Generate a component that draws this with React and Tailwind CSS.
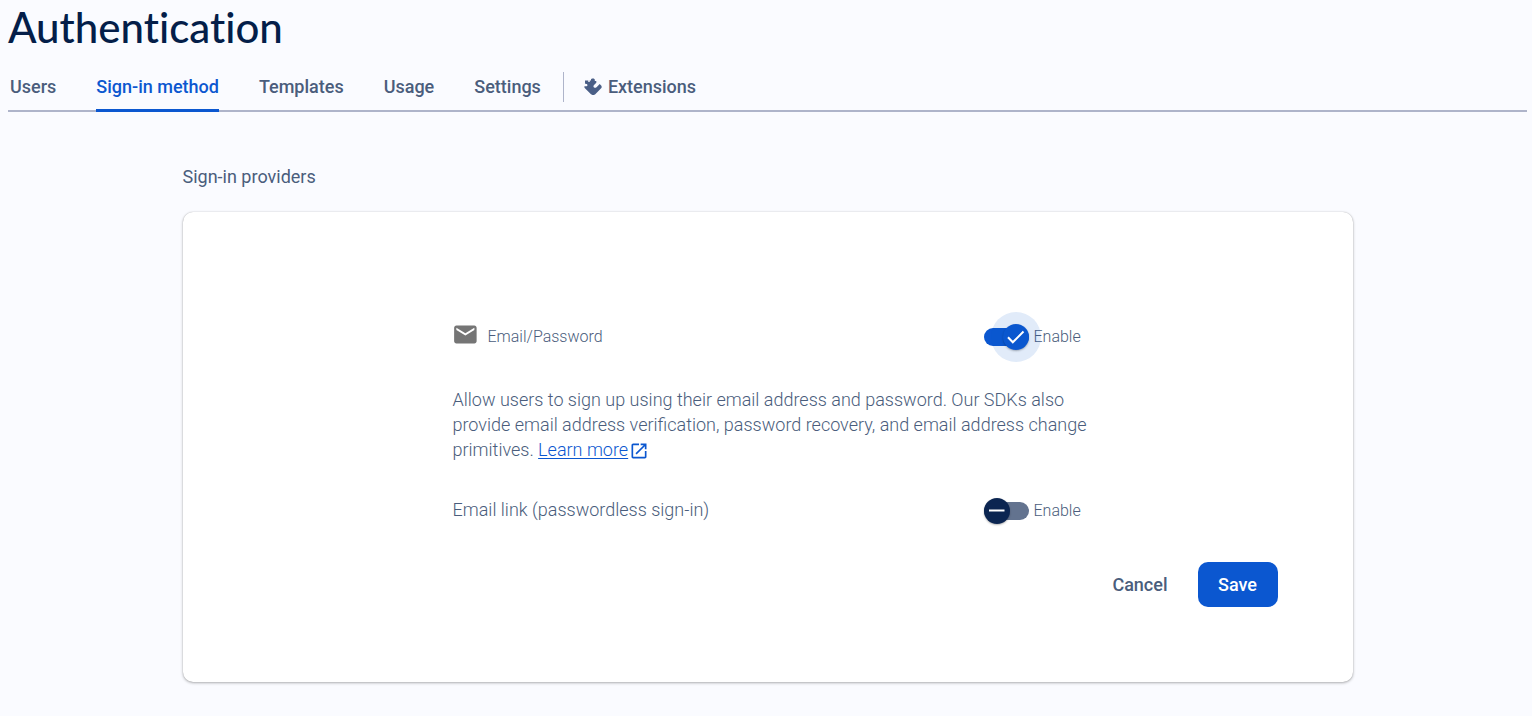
import React, { useState } from "react";

const tabs = ["Users", "Sign-in method", "Templates", "Usage", "Settings"];

function Toggle({ id, label, checked, onChange, halo }) {
  return (
    <label htmlFor={id} className="flex cursor-pointer items-center gap-[5px]">
      <span className="relative flex h-[26px] w-[45px] items-center">
        <input
          id={id}
          type="checkbox"
          role="switch"
          checked={checked}
          onChange={onChange}
          className={
            "h-[18px] w-[45px] cursor-pointer appearance-none rounded-full " +
            (checked ? "bg-[#0b57d0]" : "bg-[#63738f]")
          }
        />
        <span
          className={
            "pointer-events-none absolute top-0 flex size-[26px] items-center justify-center rounded-full shadow-[0_1px_2px_rgba(0,0,0,0.3)] " +
            (checked ? "right-0 bg-[#0b57d0]" : "left-0 bg-[#0b2551]")
          }
        >
          {halo && (
            <span className="absolute -inset-[12px] rounded-full bg-[#0b57d0]/12" />
          )}
          <svg viewBox="0 0 26 26" className="relative size-[26px]" fill="none" stroke="#fff" strokeWidth="2">
            {checked ? <path d="M5 13.200 9.800 18.300 20.500 7.500" /> : <path d="M5 12.500H20.500" />}
          </svg>
        </span>
      </span>
      <span className="min-w-[49px] text-base leading-6 font-light">{label}</span>
    </label>
  );
}

export default function App() {
  const [password, setPassword] = useState(true);
  const [link, setLink] = useState(false);
  return (
    <div className="min-h-screen bg-[#fafbff] pr-[5px] pb-8 pl-2 font-['Roboto',sans-serif] text-lg text-[#4a5d7c]">
      <h1 className="pt-[3px] pb-px font-['Lato',sans-serif] text-[42px] leading-[48px] font-medium text-[#041e49] [font-variant-ligatures:none]">
        Authentication
      </h1>
      <nav className="mt-4 flex h-[44px] items-start border-b-2 border-[#aeb4ca] pl-[2px] font-medium">
        <div className="flex gap-10">
          {tabs.map((tab) => (
            <a
              key={tab}
              href="#"
              className={
                "flex h-[44px] items-start rounded-t-[2px] border-b-3 pt-1 leading-[30px] " +
                (tab === "Sign-in method" ? "border-[#0b57d0] text-[#0b57d0]" : "border-transparent")
              }
            >
              {tab}
            </a>
          ))}
        </div>
        <a href="#" className="mt-1 ml-[22px] flex h-[30px] items-center gap-[6px] border-l border-[#aeb4ca] pl-5">
          <svg viewBox="0 0 18 18" className="size-[18px]" fill="#4a5f87">
            <path d="M1 2.500H4.300V4H5.700V2.500H7V1.200L8 .4H9.800L10.800 1.500V3H12.300V4.700L10.300 6.700L9.500 7.700V9L10.500 9.800H11.800L12.800 9L15.700 6L17.600 7.900V9.800L11.300 16.200L10 17H8.500L7 16.200L1.200 10.500L.4 9.500V8.300H2.700L3.600 7.200L2.900 6H1.500L1 5Z" />
          </svg>
          Extensions
        </a>
      </nav>

      <main className="mx-auto mt-[52px] max-w-[1170px]">
        <h2 className="text-lg leading-[26px] font-normal">Sign-in providers</h2>
        <form
          onSubmit={(e) => e.preventDefault()}
          className="mt-[22px] rounded-[10px] bg-white px-[75px] pt-[112px] pb-[75px] shadow-[0_1px_3px_rgba(0,0,0,0.3),0_0_1px_rgba(0,0,0,0.25)]"
        >
          <div className="mx-auto max-w-[630px] font-light">
            <div className="flex items-center justify-between">
              <div className="flex items-center gap-2 text-base leading-6">
                <svg viewBox="1 1 24 24" className="-mt-1 size-[27px] shrink-0" fill="#757575">
                  <path d="M20 4H4c-1.100 0-1.990.9-1.990 2L2 18c0 1.100.9 2 2 2h16c1.100 0 2-.9 2-2V6c0-1.100-.9-2-2-2zm0 4-8 5-8-5V6l8 5 8-5v2z" />
                </svg>
                Email/Password
              </div>
              <Toggle id="password" label="Enable" checked={password} onChange={() => setPassword(!password)} halo />
            </div>
            <p className="mt-[37px] -mr-4 leading-[25px]">
              Allow users to sign up using their email address and password. Our SDKs also provide email
              address verification, password recovery, and email address change primitives.{" "}
              <a href="#" className="whitespace-nowrap text-[#0b57d0]">
                <span className="underline underline-offset-2">Learn more</span>
                <svg viewBox="0 0 24 24" className="ml-px inline size-5 align-[-5px]" fill="currentColor">
                  <path d="M19 19H5V5h7V3H5c-1.110 0-2 .9-2 2v14c0 1.100.89 2 2 2h14c1.100 0 2-.9 2-2v-7h-2v7zM14 3v2h3.590l-9.830 9.830 1.410 1.410L19 6.410V10h2V3h-7z" />
                </svg>
              </a>
            </p>
            <div className="mt-9 flex items-start justify-between">
              <span className="leading-6">Email link (passwordless sign-in)</span>
              <Toggle id="link" label="Enable" checked={link} onChange={() => setLink(!link)} />
            </div>
          </div>
          <div className="mt-[38px] flex justify-end gap-[10px] font-medium">
            <button type="button" className="h-[45px] px-5">Cancel</button>
            <button type="submit" className="h-[45px] min-w-20 rounded-[10px] bg-[#0b57d0] px-5 text-white">Save</button>
          </div>
        </form>
      </main>
    </div>
  );
}
